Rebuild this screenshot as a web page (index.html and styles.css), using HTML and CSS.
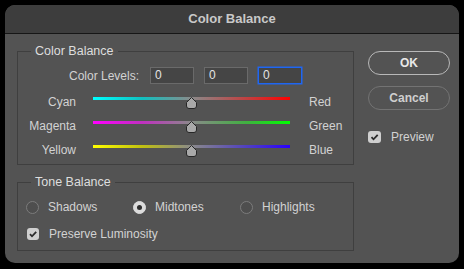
FILE: index.html
```html
<!DOCTYPE html>
<html lang="en">
<head>
    <meta charset="UTF-8">
    <title>Color Balance</title>
    <link rel="stylesheet" href="styles.css">
</head>
<body>
    <div class="dialog">
        <div class="titlebar">Color Balance</div>
        <div class="content">
            <div class="main">
                <fieldset class="group levels">
                    <legend>Color Balance</legend>
                    <div class="levels-row">
                        <span class="levels-label">Color Levels:</span>
                        <span class="level">0</span>
                        <span class="level">0</span>
                        <span class="level active">0</span>
                    </div>
                    <div class="slider-row">
                        <span class="left-label">Cyan</span>
                        <div class="track track-cr">
                            <svg class="thumb" width="11" height="12" viewBox="0 0 11 12"><path d="M5.5 0.5 L10.5 5.5 L10.5 9 Q10.5 11.5 8 11.5 L3 11.5 Q0.5 11.5 0.5 9 L0.5 5.5 Z" fill="#a9a9a9" stroke="#262626"/></svg>
                        </div>
                        <span class="right-label">Red</span>
                    </div>
                    <div class="slider-row">
                        <span class="left-label">Magenta</span>
                        <div class="track track-mg">
                            <svg class="thumb" width="11" height="12" viewBox="0 0 11 12"><path d="M5.5 0.5 L10.5 5.5 L10.5 9 Q10.5 11.5 8 11.5 L3 11.5 Q0.5 11.5 0.5 9 L0.5 5.5 Z" fill="#a9a9a9" stroke="#262626"/></svg>
                        </div>
                        <span class="right-label">Green</span>
                    </div>
                    <div class="slider-row">
                        <span class="left-label">Yellow</span>
                        <div class="track track-yb">
                            <svg class="thumb" width="11" height="12" viewBox="0 0 11 12"><path d="M5.5 0.5 L10.5 5.5 L10.5 9 Q10.5 11.5 8 11.5 L3 11.5 Q0.5 11.5 0.5 9 L0.5 5.5 Z" fill="#a9a9a9" stroke="#262626"/></svg>
                        </div>
                        <span class="right-label">Blue</span>
                    </div>
                </fieldset>

                <fieldset class="group tone">
                    <legend>Tone Balance</legend>
                    <div class="radio-row">
                        <div class="radio-item"><span class="radio"></span>Shadows</div>
                        <div class="radio-item"><span class="radio checked"></span>Midtones</div>
                        <div class="radio-item"><span class="radio"></span>Highlights</div>
                    </div>
                    <div class="check-row luminosity">
                        <span class="checkbox"><svg width="12" height="12" viewBox="0 0 12 12"><path d="M3 6.2 L5 8.3 L9.2 3.8" fill="none" stroke="#2b2b2b" stroke-width="1.8"/></svg></span>
                        Preserve Luminosity
                    </div>
                </fieldset>
            </div>

            <div class="side">
                <button class="btn primary">OK</button>
                <button class="btn">Cancel</button>
                <div class="check-row preview">
                    <span class="checkbox"><svg width="13" height="12" viewBox="0 0 13 12"><path d="M3.5 6.2 L5.5 8.3 L9.7 3.8" fill="none" stroke="#2b2b2b" stroke-width="1.8"/></svg></span>
                    Preview
                </div>
            </div>
        </div>
    </div>
</body>
</html>
```

FILE: styles.css
```css
body {
    margin: 0;
    background: #000;
    font-family: "Liberation Sans", Arial, sans-serif;
    font-size: 12px;
    color: #d2d2d2;
}
.dialog {
    margin: 5px;
    width: 454px;
    height: 258px;
    background: #535353;
    border-radius: 10px;
    overflow: hidden;
}
.titlebar {
    height: 28px;
    line-height: 28px;
    background: #3d3d3d;
    border-bottom: 1px solid #161616;
    text-align: center;
    font-weight: bold;
    font-size: 13px;
    color: #c9c9c9;
}
.content {
    display: flex;
    padding: 10px 0 0 12px;
}
.main {
    width: 337px;
}
.group {
    margin: 0;
    padding: 0;
    border: 1px solid #3f3f3f;
    min-width: 0;
}
.group legend {
    margin-left: 13px;
    padding: 0 4px;
    font-size: 12.5px;
    line-height: 14px;
    color: #dedede;
}
.levels {
    padding-bottom: 2px;
}
.levels-row {
    display: flex;
    align-items: center;
    gap: 10px;
    margin-top: 9px;
    margin-bottom: 6px;
}
.levels-label {
    width: 121px;
    text-align: right;
    margin-right: 1px;
}
.level {
    width: 44px;
    height: 17px;
    line-height: 15px;
    box-sizing: border-box;
    padding: 0 4px;
    background: #454545;
    border: 1px solid #6a6a6a;
    color: #e4e4e4;
}
.level.active {
    border: 1px solid #1f66f2;
    box-shadow: 0 0 0 0.5px #1f66f2;
}
.slider-row {
    display: flex;
    height: 24px;
    line-height: 24px;
}
.left-label {
    width: 58px;
    text-align: right;
}
.track {
    position: relative;
    width: 197px;
    height: 3px;
    margin: 7px 19px 0 17px;
}
.track-cr {
    background: linear-gradient(90deg, #00ffff 0%, #10c0c0 25%, #8a8a8a 50%, #c04040 78%, #ff0000 100%);
}
.track-mg {
    background: linear-gradient(90deg, #ff00ff 0%, #c030c0 25%, #8a8a8a 50%, #40b040 78%, #00ff00 100%);
}
.track-yb {
    background: linear-gradient(90deg, #ffff00 0%, #c0c010 25%, #8a8a8a 50%, #5040c0 78%, #2a00ff 100%);
}
.thumb {
    position: absolute;
    left: 93px;
    top: 0;
    display: block;
}
.tone {
    margin-top: 10px;
    padding: 8px 0 6px 0;
}
.radio-row {
    display: flex;
    height: 20px;
    align-items: center;
    padding-left: 8px;
}
.radio-item {
    width: 107px;
    display: flex;
    align-items: center;
}
.radio {
    width: 13px;
    height: 13px;
    box-sizing: border-box;
    border: 1px solid #7c7c7c;
    border-radius: 50%;
    margin-right: 9px;
    background: #4e4e4e;
}
.radio.checked {
    background: #dcdcdc;
    border-color: #dcdcdc;
    position: relative;
}
.radio.checked::after {
    content: "";
    position: absolute;
    left: 3px;
    top: 3px;
    width: 5px;
    height: 5px;
    border-radius: 50%;
    background: #2e2e2e;
}
.check-row {
    display: flex;
    align-items: center;
    height: 20px;
}
.luminosity {
    margin-top: 7px;
    padding-left: 8px;
}
.checkbox {
    width: 12px;
    height: 12px;
    margin: 0 10px 0 1px;
    border-radius: 3px;
    background: #cfcfcf;
    display: flex;
}
.side {
    width: 82px;
    margin-left: 14px;
    margin-top: 7px;
}
.btn {
    display: block;
    width: 82px;
    height: 24px;
    margin: 0 0 11px;
    padding: 0;
    border-radius: 12px;
    background: transparent;
    border: 1.5px solid #737373;
    color: #cfcfcf;
    font-family: inherit;
    font-size: 12px;
    font-weight: bold;
}
.btn.primary {
    border-color: #b8b8b8;
    color: #e8e8e8;
}
.preview {
    margin-top: 17px;
}
.preview .checkbox {
    margin: 0 10px 0 0;
    width: 13px;
}
```
